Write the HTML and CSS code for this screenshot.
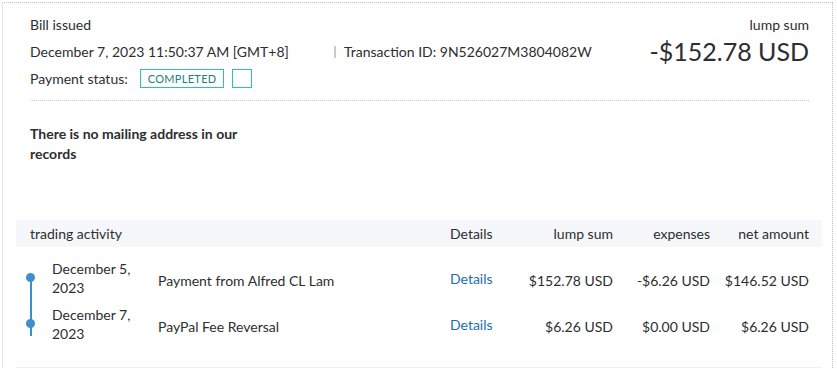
FILE: index.html
```html
<!DOCTYPE html>
<html>
<head>
<meta charset="utf-8">
<link rel="stylesheet" href="styles.css">
</head>
<body>
<div class="panel">
  <div class="summary">
    <div class="summary-left">
      <div class="line title">Bill issued</div>
      <div class="line meta">
        <span class="date">December 7, 2023 11:50:37 AM [GMT+8]</span>
        <span class="txn"><span class="bar"></span>Transaction ID: 9N526027M3804082W</span>
      </div>
      <div class="line status">
        <span>Payment status:</span>
        <span class="badge">COMPLETED</span>
        <span class="badge-empty"></span>
      </div>
    </div>
    <div class="summary-right">
      <div class="line">lump sum</div>
      <div class="big">-$152.78 USD</div>
    </div>
  </div>
  <div class="address">There is no mailing address in our records</div>
  <div class="activity">
    <div class="row head">
      <div class="c-act">trading activity</div>
      <div class="c-det">Details</div>
      <div class="c-num">lump sum</div>
      <div class="c-num">expenses</div>
      <div class="c-num">net amount</div>
    </div>
    <div class="rows">
      <div class="row item first">
        <div class="c-date"><span class="dot"></span><span>December 5,<br>2023</span></div>
        <div class="c-desc">Payment from Alfred CL Lam</div>
        <div class="c-det"><a class="link">Details</a></div>
        <div class="c-num">$152.78 USD</div>
        <div class="c-num">-$6.26 USD</div>
        <div class="c-num">$146.52 USD</div>
      </div>
      <div class="row item last">
        <div class="c-date"><span class="dot"></span><span>December 7,<br>2023</span></div>
        <div class="c-desc">PayPal Fee Reversal</div>
        <div class="c-det"><a class="link">Details</a></div>
        <div class="c-num">$6.26 USD</div>
        <div class="c-num">$0.00 USD</div>
        <div class="c-num">$6.26 USD</div>
      </div>
    </div>
  </div>
</div>
</body>
</html>
```
FILE: styles.css
```css
* { box-sizing: border-box; }
html, body { margin: 0; padding: 0; background: #fff; }
body {
  font-family: Lato, "Noto Sans", sans-serif;
  font-size: 14px;
  color: #2c2e2f;
}
.panel {
  margin: 2px 0 0 2px;
  width: 831px;
  height: 366px;
  border-top: 1px dotted #bdbdbd;
  border-right: 1px dotted #bdbdbd;
  border-left: 1px solid #e4e4e4;
  padding: 0 10px 0 13px;
}
.summary {
  display: flex;
  justify-content: space-between;
  padding: 8px 0 8px 0;
  margin: 0 13px 0 14px;
  border-bottom: 1px dotted #c8c8c8;
}
.line { height: 27px; line-height: 27px; }
.meta { display: flex; }
.date { width: 304px; }
.txn { display: flex; align-items: center; }
.bar { width: 2px; height: 12px; background: #c9c9c9; margin-right: 8px; }
.status { display: flex; align-items: center; }
.badge {
  margin-left: 12px;
  height: 19px;
  line-height: 17px;
  border: 1px solid #2fc59a;
  color: #1b7f78;
  font-size: 11px;
  letter-spacing: 0.3px;
  padding: 0 7px;
}
.badge-empty { margin-left: 8px; width: 20px; height: 19px; border: 1px solid #2fc59a; }
.summary-right { text-align: right; }
.big { font-size: 25px; line-height: 30px; margin-top: -2px; }
.address {
  font-weight: bold;
  width: 235px;
  line-height: 20px;
  margin: 23px 0 0 14px;
  height: 96px;
}
.activity { border-bottom: 1px solid #f0f0f0; padding-bottom: 20px; }
.row {
  display: grid;
  grid-template-columns: 142px 292px 70px 93px 97px 99px;
  padding-right: 13px;
  align-items: center;
}
.head { background: #f5f7fa; height: 27px; }
.head .c-act { grid-column: 1 / 3; padding-left: 14px; }
.rows { padding-top: 8px; }
.item { height: 46px; }
.c-num { text-align: right; }
.c-date { display: flex; align-items: center; position: relative; padding-left: 10px; line-height: 19px; }
.c-date span:last-child { margin-left: 17px; }
.dot { width: 9px; height: 9px; border-radius: 50%; background: #3b8fcd; position: relative; z-index: 1; margin-top: -2px; }
.first .c-date::after {
  content: "";
  position: absolute;
  left: 14px;
  top: 21px;
  width: 2px;
  height: 56px;
  background: #3b8fcd;
}
.item .c-desc, .item .c-num { padding-top: 4px; }
.item .c-det { padding-top: 1px; }
.link { color: #1a6fb4; }
```
